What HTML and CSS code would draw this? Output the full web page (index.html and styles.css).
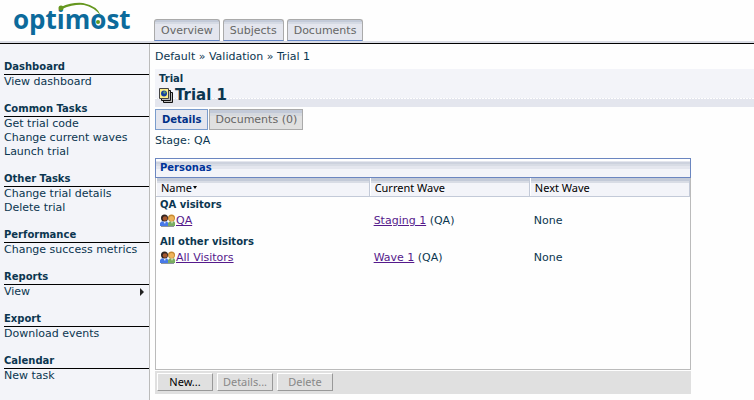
FILE: index.html
```html
<!DOCTYPE html>
<html lang="en">
<head>
<meta charset="utf-8">
<title>Trial 1 - optimost</title>
<link rel="stylesheet" href="styles.css">
</head>
<body>
<svg class="symbols" aria-hidden="true">
  <symbol id="people" viewBox="0 0 16 14">
    <path d="M8 12V9Q9 7 12 7Q15 7 15 9V12Z" fill="#79ad62"/>
    <path d="M11 7h2l-1 3z" fill="#f5f5dc"/>
    <circle cx="11.5" cy="4" r="3.5" fill="#c88a30"/>
    <circle cx="11.5" cy="4.5" r="2.5" fill="#eeb45c"/>
    <path d="M0 12V9Q1 7 4 7Q8 7 8 9V12Z" fill="#4779e8"/>
    <path d="M3 7h3l-1 3z" fill="#e9efff"/>
    <circle cx="4.5" cy="4" r="3.5" fill="#302522"/>
    <circle cx="5" cy="4.5" r="2.3" fill="#a4572f"/>
    <path d="M1 12.5h13" stroke="#8d969d"/>
  </symbol>
</svg>
<header class="top">
  <svg class="logo" viewBox="0 0 136 37" role="img" aria-label="optimost">
    <text x="13" y="29">optimost</text>
    <path d="M61 7Q72 2 83 3Q98 6 101 16Q94 7 84 5Q74 4 62 9Z" fill="#65971f"/>
    <circle cx="61" cy="8" r="2.5" fill="#65971f"/>
    <circle cx="98" cy="22" r="2" fill="#65971f"/>
  </svg>
  <nav class="site-tabs"><a href="#">Overview</a><a href="#">Subjects</a><a href="#">Documents</a></nav>
</header>
<div class="layout">
  <aside class="side">
    <section><h2>Dashboard</h2><a href="#">View dashboard</a></section>
    <section><h2>Common Tasks</h2><a href="#">Get trial code</a><a href="#">Change current waves</a><a href="#">Launch trial</a></section>
    <section><h2>Other Tasks</h2><a href="#">Change trial details</a><a href="#">Delete trial</a></section>
    <section><h2>Performance</h2><a href="#">Change success metrics</a></section>
    <section><h2>Reports</h2><a href="#" class="submenu">View<svg width="4" height="8" viewBox="0 0 4 8" aria-hidden="true"><path d="M0 0L4 4L0 8Z" fill="#222"/></svg></a></section>
    <section><h2>Export</h2><a href="#">Download events</a></section>
    <section><h2>Calendar</h2><a href="#">New task</a></section>
  </aside>
  <main>
    <nav class="crumbs"><a href="#">Default</a> » <a href="#">Validation</a> » <a href="#">Trial 1</a></nav>
    <div class="title">
      <p>Trial</p>
      <h1><svg width="15" height="16" viewBox="0 0 15 16" aria-hidden="true">
        <path d="M4.5 4.5h9v10h-9z" fill="#bbb" stroke="#111"/>
        <path d="M2.5 2.5h9v10h-9z" fill="#bbb" stroke="#111"/>
        <path d="M.5.5h9v10h-9z" fill="#fff08a" stroke="#444"/>
        <circle cx="5" cy="5.5" r="3" fill="#1742a0"/>
        <path d="M5 3l2 1-1 2-2-1z" fill="#63a36a"/>
      </svg>Trial 1</h1>
    </div>
    <nav class="tabs"><a href="#" class="active">Details</a><a href="#">Documents (0)</a></nav>
    <p class="stage">Stage: QA</p>
    <section class="panel">
      <h2>Personas</h2>
      <div class="grid">
        <table>
          <thead><tr><th class="name">Name<svg width="4" height="3" viewBox="0 0 4 3" aria-hidden="true"><path d="M0 0h4L2 3z"/></svg></th><th class="wave">Current Wave</th><th class="wave">Next Wave</th></tr></thead>
          <tbody>
            <tr class="group"><td colspan="3">QA visitors</td></tr>
            <tr><td><svg class="people" aria-hidden="true"><use href="#people"/></svg><a href="#">QA</a></td><td><a href="#">Staging 1</a> (QA)</td><td>None</td></tr>
            <tr class="group"><td colspan="3">All other visitors</td></tr>
            <tr><td><svg class="people" aria-hidden="true"><use href="#people"/></svg><a href="#">All Visitors</a></td><td><a href="#">Wave 1</a> (QA)</td><td>None</td></tr>
          </tbody>
        </table>
      </div>
      <div class="actions"><button type="button">New...</button><button type="button" disabled>Details...</button><button type="button" disabled>Delete</button></div>
    </section>
  </main>
</div>
</body>
</html>
```
FILE: styles.css
```css
* { box-sizing: border-box; }
body {
  margin: 0;
  min-height: 100vh;
  display: flex;
  flex-direction: column;
  background: #fefefe;
  color: #0b3650;
  font: 11px/14px "DejaVu Sans", Verdana, sans-serif;
}
h1, h2, p { margin: 0; }
h2 { font-size: 10px; line-height: 14px; }
a { color: inherit; text-decoration: none; }
.symbols { position: absolute; width: 0; height: 0; }

.top {
  display: flex;
  align-items: flex-end;
  height: 44px;
  border-bottom: 1px solid #000;
  box-shadow: inset 0 -2px #dadce5;
  padding-bottom: 2px;
}
.logo { width: 136px; height: 37px; margin: 0 18px 4px 0; flex: none; }
.logo text { font: 700 26px "Open Sans", sans-serif; fill: #0c6a9b; }
.site-tabs { display: flex; gap: 3px; }
.site-tabs a {
  padding: 4px 6px 2px;
  border: 1px solid #aaa;
  border-bottom-color: #6688c8;
  border-radius: 3px 3px 0 0;
  background: linear-gradient(#c3cad8 2px, #d5dae4 2px 4px, #e4e6ee 4px);
  color: #666;
  line-height: 14px;
}

.layout { display: flex; flex: 1; }
.side {
  flex: none;
  width: 150px;
  padding: 15px 0 0 4px;
  border-right: 1px solid #bbb;
  background: #f3f4f9;
}
.side section { margin-bottom: 12px; }
.side h2 { padding-top: 1px; border-bottom: 1px solid #000; }
.side a { display: block; }
.side .submenu { display: flex; justify-content: space-between; align-items: center; padding-right: 5px; }

main { flex: 1; min-width: 0; padding: 6px 0 0 5px; }
.title {
  margin-top: 5px;
  padding: 3px 4px 2px;
  background:
    repeating-linear-gradient(90deg, #fff 0 2px, #e4e6ee 2px 3px) 0 29px / 100% 1px no-repeat,
    linear-gradient(#f3f4f9 29px, #e4e6ee 29px);
}
.title p { font-weight: bold; font-size: 10px; }
.title h1 { display: flex; align-items: center; gap: 1px; font-size: 15px; line-height: 19px; }

.tabs { display: flex; gap: 1px; margin-top: 2px; }
.tabs a {
  padding: 3px 5px 2px;
  border: 1px solid #aaa;
  background: linear-gradient(#c3cad8 3px, #d5d9df 3px 6px, #e0e0e0 6px);
  color: #666;
}
.tabs .active { padding: 3px 6px 2px; border-color: #7a9ccc; background: #e4e6ee; color: #003087; font-weight: bold; font-size: 10px; }
.stage { margin-top: 4px; }

.panel { width: calc(100% - 63px); margin-top: 10px; }
.panel h2 {
  padding: 2px 4px;
  border: 1px solid #6b86c0;
  background: linear-gradient(#fff 2px, #e4e6ee 2px 3px, #cdd2de 3px 5px, #d8dce5 5px 7px, #e4e6ee 7px 10px, #f3f4f9 10px);
  color: #003399;
}
.grid { min-height: 192px; border: 1px solid #bbb; border-top: 0; }
table { width: 100%; border-collapse: separate; border-spacing: 0; table-layout: fixed; }
th {
  height: 19px;
  padding: 2px 4px 0 5px;
  border: 1px solid #c3cad8;
  border-width: 0 1px 1px 0;
  background: linear-gradient(#c3cad8 3px, #d8dce5 3px 5px, #f3f4f9 5px);
  box-shadow: inset 1px 0 #fff;
  color: #000;
  font: 11px/14px "Noto Sans", Tahoma, sans-serif;
  text-align: left;
}
th.wave { width: 30%; }
th svg { margin: 0 0 3px 1px; }
td { height: 21px; padding: 1px 4px 0; vertical-align: top; }
tbody a { color: #551a8b; text-decoration: underline; }
.group td { height: 16px; font-weight: bold; font-size: 10px; }
.people { width: 16px; height: 14px; vertical-align: top; }

.actions { display: flex; gap: 4px; margin-top: 1px; padding: 2px 2px 3px; background: #e0e0e0; }
button {
  width: 56px;
  height: 18px;
  padding: 0;
  border: 1px solid;
  border-color: #fff #999 #999 #fff;
  background: #e0e0e0;
  color: #000;
  font: 11px/14px "Noto Sans", Tahoma, sans-serif;
}
button:disabled { color: #888; }
```
